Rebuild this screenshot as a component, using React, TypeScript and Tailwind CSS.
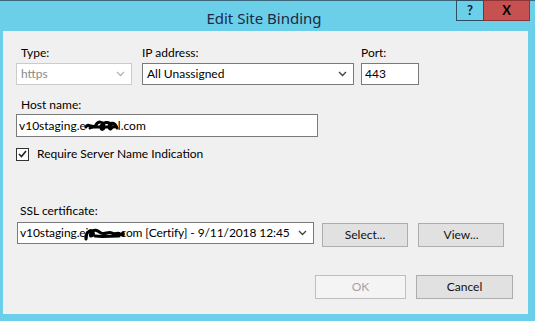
import React from 'react';

const font = { fontFamily: 'Lato, "Noto Sans", sans-serif' };

const Chevron = ({ muted }: { muted?: boolean }) => (
  <svg width="9" height="6" viewBox="0 0 9 6" className="shrink-0">
    <path d="M1 1 L4.5 4.5 L8 1" fill="none" stroke={muted ? '#b4b4b4' : '#404040'} strokeWidth="1.3" />
  </svg>
);

// black scribble used to hide part of the domain
const Scribble = ({ w, d, cls }: { w: number; d: string; cls: string }) => (
  <svg width={w} height="16" viewBox={`0 0 ${w} 16`} className={`shrink-0 ${cls}`}>
    <path d={d} fill="none" stroke="#000" strokeWidth="3" strokeLinecap="round" strokeLinejoin="round" />
  </svg>
);

const Button = ({ label, w, disabled }: { label: string; w: string; disabled?: boolean }) => (
  <button
    className={
      disabled
        ? `${w} h-[24px] border border-[#bfbfbf] bg-[#f4f4f4] text-[#a3a3a3] text-[12px]`
        : `${w} h-[24px] border border-[#adadad] bg-[#e1e1e1] text-[#111] text-[12px]`
    }
  >
    {label}
  </button>
);

export default function App() {
  return (
    <div className="w-[535px] h-[321px] bg-[#6ccfe9] flex flex-col overflow-hidden" style={font}>
      {/* title bar */}
      <div className="h-[31px] flex shrink-0 border-t border-[#3d6b7c]">
        <div
          className="w-[456px] pl-[72px] text-center text-[15px] text-[#1b2a44] pt-[6px]"
          style={{ fontFamily: '"Noto Sans", sans-serif' }}
        >
          Edit Site Binding
        </div>
        <div className="flex h-[21px] -mt-px">
          <div className="w-[28px] border border-[#2f4f63] flex items-center justify-center text-[13px] font-bold text-[#0d1a33]">
            ?
          </div>
          <div className="w-[46px] bg-[#c75050] border border-[#8f3434] border-l-0 flex items-center justify-center text-[13px] font-bold text-black">
            X
          </div>
        </div>
      </div>

      {/* client area */}
      <div className="ml-[3px] mr-[7px] h-[283px] bg-[#f0f0f0] pl-[13px] pt-[15px] text-[12px] text-black flex flex-col">
        <div className="flex">
          <div className="w-[116px] flex flex-col">
            <div className="h-[17px] pl-[5px] leading-[14px]">Type:</div>
            <div className="h-[22px] border border-[#cccccc] bg-white flex items-center pl-[4px] pr-[6px] text-[#8a8a8a]">
              <span className="flex-1">https</span>
              <Chevron muted />
            </div>
          </div>
          <div className="w-[212px] ml-[10px] flex flex-col">
            <div className="h-[17px] leading-[14px]">IP address:</div>
            <div className="h-[22px] border border-[#7a7a7a] bg-white flex items-center pl-[4px] pr-[6px]">
              <span className="flex-1">All Unassigned</span>
              <Chevron />
            </div>
          </div>
          <div className="w-[58px] ml-[7px] flex flex-col">
            <div className="h-[17px] leading-[14px]">Port:</div>
            <div className="h-[22px] border border-[#7a7a7a] bg-white flex items-center pl-[3px]">443</div>
          </div>
        </div>

        <div className="mt-[13px] h-[16px] pl-[5px] leading-[14px]">Host name:</div>
        <div className="w-[302px] h-[23px] border border-[#7a7a7a] bg-white flex items-center pl-[2px]">
          <span>v10staging.e</span>
          <Scribble
            w={36}
            cls="-mx-[2px]"
            d="M2 9 C4 4 9 12 12 7 C14 3 19 3 20 8 C21 12 16 13 17 8 C19 4 25 3 27 7 C29 11 25 13 25 8 C26 4 31 4 33 10 M6 10 C10 8 18 9 30 9"
          />
          <span>l.com</span>
        </div>

        <div className="mt-[10px] h-[14px] flex items-center">
          <div className="w-[13px] h-[13px] border border-[#333] bg-white flex items-center justify-center">
            <svg width="9" height="8" viewBox="0 0 9 8">
              <path d="M1 4 L3.5 6.5 L8 1" fill="none" stroke="#222" strokeWidth="1.6" />
            </svg>
          </div>
          <span className="ml-[8px]">Require Server Name Indication</span>
        </div>

        <div className="mt-[43px] h-[18px] pl-[4px] leading-[14px]">SSL certificate:</div>
        <div className="flex items-start">
          <div className="w-[297px] h-[22px] ml-px border border-[#7a7a7a] bg-white flex items-center pl-[2px] pr-[6px]">
            <span className="flex items-center flex-1 whitespace-nowrap tracking-[-0.1px]">
              <span>v10staging.ej</span>
              <Scribble
                w={42}
                cls="-ml-[5px] -mr-[5px]"
                d="M3 14 C2 8 8 3 10 7 C12 11 5 13 8 8 C11 3 15 6 18 8 C22 10 25 6 29 8 C32 10 35 7 37 9 C40 11 41 10 40 8 M12 11 C19 12 27 11 36 11"
              />
              <span>com [Certify] - 9/11/2018 12:45</span>
            </span>
            <Chevron />
          </div>
          <div className="ml-[8px] mt-px flex gap-[10px]">
            <Button label="Select..." w="w-[86px]" />
            <Button label="View..." w="w-[86px]" />
          </div>
        </div>

        <div className="mt-[28px] flex justify-end pr-[15px] gap-[10px]">
          <Button label="OK" w="w-[91px]" disabled />
          <Button label="Cancel" w="w-[97px]" />
        </div>
      </div>
    </div>
  );
}
